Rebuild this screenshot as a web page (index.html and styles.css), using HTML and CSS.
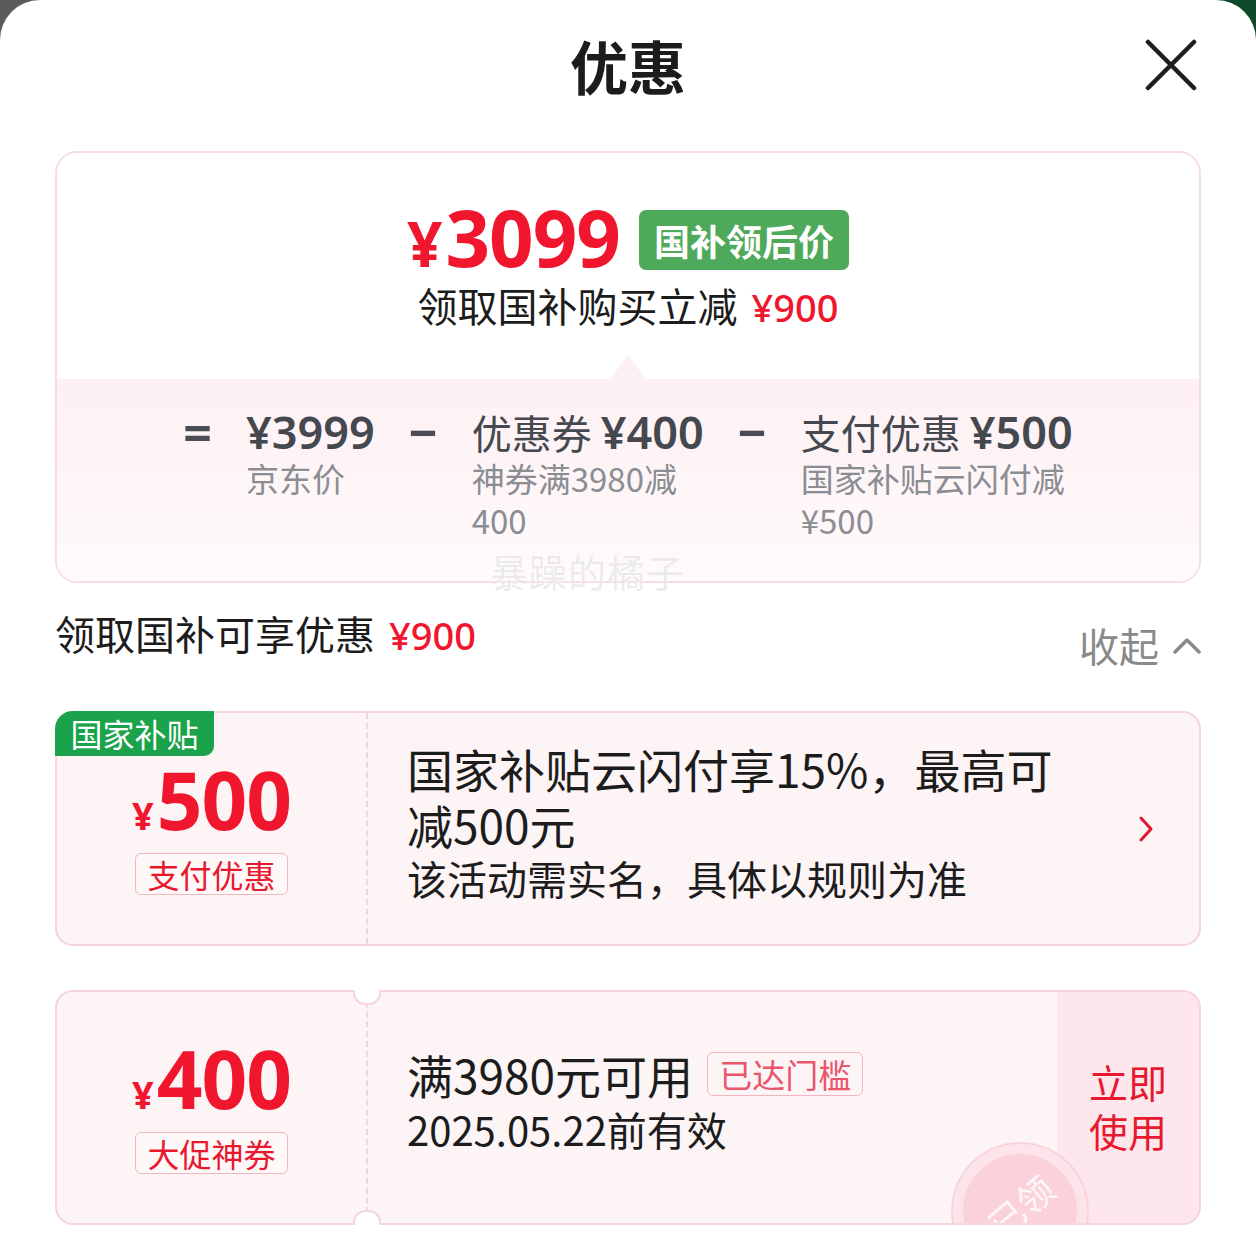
FILE: index.html
```html
<!DOCTYPE html>
<html lang="zh-CN">
<head>
    <meta charset="UTF-8">
    <meta name="viewport" content="width=device-width, initial-scale=1.0">
    <title>优惠</title>
    <link rel="stylesheet" href="styles.css">
</head>
<body>
<div class="sheet">
    <header class="head">
        <h1>优惠</h1>
        <svg class="close" viewBox="0 0 52 52" aria-label="关闭">
            <path d="M3 3 L49 49 M49 3 L3 49" stroke="#1e1e1e" stroke-width="4.5" stroke-linecap="round" fill="none"/>
        </svg>
    </header>

    <section class="summary">
        <div class="summary-top">
            <div class="final">
                <span class="final-price"><span class="yen">¥</span>3099</span>
                <span class="badge">国补领后价</span>
            </div>
            <div class="final-note">领取国补购买立减<span class="red">¥900</span></div>
        </div>
        <div class="calc">
            <span class="op">=</span>
            <div class="term">
                <div class="term-main"><span class="num">¥3999</span></div>
                <div class="term-sub">京东价</div>
            </div>
            <span class="op">−</span>
            <div class="term">
                <div class="term-main">优惠券 <span class="num">¥400</span></div>
                <div class="term-sub">神券满3980减400</div>
            </div>
            <span class="op">−</span>
            <div class="term">
                <div class="term-main">支付优惠 <span class="num">¥500</span></div>
                <div class="term-sub">国家补贴云闪付减¥500</div>
            </div>
        </div>
        <div class="watermark">暴躁的橘子</div>
    </section>

    <div class="sec-head">
        <div class="sec-title">领取国补可享优惠<span class="red">¥900</span></div>
        <div class="collapse">
            收起
            <svg width="28" height="18" viewBox="0 0 28 18">
                <polyline points="2,16 14,4 26,16" stroke="#8a8a8a" stroke-width="3.5" fill="none" stroke-linecap="round" stroke-linejoin="round"/>
            </svg>
        </div>
    </div>

    <div class="coupon">
        <div class="subsidy">国家补贴</div>
        <div class="coupon-left">
            <div class="amount"><span class="yen">¥</span>500</div>
            <div class="tag">支付优惠</div>
        </div>
        <div class="coupon-body">
            <div>
                <div class="coupon-title">国家补贴云闪付享15%，最高可减500元</div>
                <div class="coupon-desc">该活动需实名，具体以规则为准</div>
            </div>
            <svg class="arrow" width="18" height="28" viewBox="0 0 18 28">
                <polyline points="4,3 14,14 4,25" stroke="#e3162d" stroke-width="3" fill="none" stroke-linecap="round" stroke-linejoin="round"/>
            </svg>
        </div>
    </div>

    <div class="coupon ticket">
        <div class="coupon-left">
            <div class="amount"><span class="yen">¥</span>400</div>
            <div class="tag">大促神券</div>
        </div>
        <div class="coupon-body">
            <div>
                <div class="coupon-line">满3980元可用<span class="reached">已达门槛</span></div>
                <div class="coupon-date">2025.05.22前有效</div>
            </div>
        </div>
        <div class="coupon-action">立即<br>使用</div>
        <div class="stamp-clip">
            <div class="stamp"><span>已领</span></div>
        </div>
    </div>
</div>
</body>
</html>
```

FILE: styles.css
```css
* {
    box-sizing: border-box;
}
html {
    background: linear-gradient(90deg, #5b5b5b 0%, #3b4a40 50%, #0d4a2a 100%);
}
body {
    margin: 0;
    font-family: "Noto Sans CJK SC", "Noto Sans", sans-serif;
    color: #1c1c1c;
}
.sheet {
    background: #fff;
    border-radius: 40px 40px 0 0;
    min-height: 1243px;
    padding: 0 55px 20px;
}
.head {
    height: 136px;
    display: grid;
    grid-template-columns: 1fr auto 1fr;
    align-items: center;
}
.head h1 {
    grid-column: 2;
    margin: -6px 0 0;
    font-size: 58px;
    font-weight: 700;
    line-height: 1;
}
.close {
    justify-self: end;
    width: 52px;
    height: 52px;
    margin-right: 4px;
    margin-top: -6px;
}

/* price summary card */
.summary {
    position: relative;
    margin-top: 15px;
    border: 2px solid #f8dee3;
    border-radius: 22px;
}
.summary-top {
    position: relative;
    padding: 47px 0;
    text-align: center;
}
.summary-top::after {
    content: "";
    position: absolute;
    left: 50%;
    bottom: 0;
    transform: translateX(-50%);
    border-left: 18px solid transparent;
    border-right: 18px solid transparent;
    border-bottom: 24px solid #fdf0f2;
}
.final {
    display: flex;
    justify-content: center;
    align-items: center;
    gap: 19px;
    height: 80px;
}
.final-price {
    font-family: "Noto Sans", sans-serif;
    font-weight: 700;
    font-size: 78px;
    line-height: 80px;
    color: #f0162e;
    letter-spacing: -1px;
}
.final-price .yen {
    font-size: 62px;
    margin-right: 4px;
}
.badge {
    background: #4fa95b;
    color: #fff;
    font-size: 36px;
    font-weight: 700;
    line-height: 60px;
    padding: 0 15px;
    border-radius: 7px;
}
.final-note {
    font-size: 40px;
    line-height: 50px;
}
.red {
    font-family: "Noto Sans", sans-serif;
    font-size: 38px;
    font-weight: 500;
    color: #f0162e;
    margin-left: 14px;
}
.calc {
    height: 202px;
    padding-top: 28px;
    display: flex;
    justify-content: center;
    align-items: flex-start;
    gap: 34px;
    background: linear-gradient(#fdf0f3, #fffafb);
    border-radius: 0 0 20px 20px;
}
.op {
    font-family: "Noto Sans", sans-serif;
    font-size: 50px;
    font-weight: 700;
    line-height: 50px;
    color: #4a4d55;
}
.term {
    display: flex;
    flex-direction: column;
}
.term-main {
    font-size: 40px;
    line-height: 50px;
    color: #45484f;
    white-space: nowrap;
}
.term-main .num {
    font-family: "Noto Sans", sans-serif;
    font-size: 45px;
    font-weight: 600;
}
.term-sub {
    width: 0;
    min-width: 100%;
    font-size: 33px;
    line-height: 42px;
    color: #8b8d94;
}
.watermark {
    position: absolute;
    left: 433px;
    top: 396px;
    font-size: 38px;
    line-height: 44px;
    color: rgba(185, 185, 185, 0.28);
    text-shadow: 0 0 2px #fff;
    letter-spacing: 1px;
}

/* section heading */
.sec-head {
    height: 128px;
    padding-top: 28px;
    display: flex;
    justify-content: space-between;
    align-items: flex-start;
}
.sec-title {
    font-size: 40px;
    line-height: 44px;
}
.collapse {
    display: flex;
    align-items: center;
    gap: 14px;
    margin-top: 12px;
    font-size: 40px;
    line-height: 44px;
    color: #8a8a8a;
}

/* coupons */
.coupon {
    position: relative;
    display: flex;
    height: 235px;
    border: 2px solid #f6d5dc;
    border-radius: 18px;
    background: #fdf4f6;
}
.coupon + .coupon {
    margin-top: 44px;
}
.subsidy {
    position: absolute;
    top: -2px;
    left: -2px;
    width: 159px;
    height: 45px;
    background: #1aa34a;
    color: #fff;
    font-size: 32px;
    line-height: 45px;
    text-align: center;
    border-radius: 18px 0 10px 0;
}
.coupon-left {
    width: 309px;
    flex-shrink: 0;
    display: flex;
    flex-direction: column;
    align-items: center;
    padding-top: 46px;
}
.amount {
    font-family: "Noto Sans", sans-serif;
    font-weight: 700;
    font-size: 80px;
    line-height: 80px;
    color: #f0162e;
    letter-spacing: -1px;
}
.amount .yen {
    font-size: 38px;
    margin-right: 4px;
}
.tag {
    margin-top: -2px;
    padding: 0 11px;
    border: 1px solid #efb7c0;
    border-radius: 6px;
    background: #fff8f9;
    color: #e8182f;
    font-size: 32px;
    line-height: 40px;
}
.coupon-body {
    flex: 1;
    display: flex;
    align-items: center;
    justify-content: space-between;
    padding: 0 44px 14px 39px;
    border-left: 2px dashed #f1d6dc;
}
.arrow {
    margin-top: 14px;
}
.coupon-title {
    max-width: 665px;
    font-size: 46px;
    line-height: 56px;
}
.coupon-desc {
    font-size: 40px;
    line-height: 52px;
}
.coupon-line {
    display: flex;
    align-items: center;
    font-size: 46px;
    line-height: 56px;
}
.reached {
    margin-left: 14px;
    padding: 0 11px;
    border: 1px solid #f2b5c0;
    border-radius: 6px;
    color: #e9566b;
    font-size: 33px;
    line-height: 42px;
}
.coupon-date {
    font-size: 40px;
    line-height: 54px;
}
.coupon-action {
    width: 142px;
    flex-shrink: 0;
    display: flex;
    align-items: center;
    justify-content: center;
    padding-bottom: 4px;
    background: #fde7ed;
    border-radius: 0 16px 16px 0;
    color: #e8182f;
    font-size: 39px;
    line-height: 49px;
    text-align: center;
}
.ticket::before,
.ticket::after {
    content: "";
    position: absolute;
    left: 296px;
    width: 24px;
    height: 13px;
    background: #fff;
    border: 2px solid #f6d5dc;
    z-index: 1;
}
.ticket::before {
    top: -2px;
    border-top: none;
    border-radius: 0 0 12px 12px;
}
.ticket::after {
    bottom: -2px;
    border-bottom: none;
    border-radius: 12px 12px 0 0;
}
.stamp-clip {
    position: absolute;
    inset: 0;
    border-radius: 16px;
    overflow: hidden;
    pointer-events: none;
}
.stamp {
    position: absolute;
    left: 896px;
    top: 152px;
    width: 134px;
    height: 134px;
    border-radius: 50%;
    background: #fbd1db;
    border: 10px solid #fde4ea;
    box-shadow: 0 0 0 2px #f9d3db;
    display: flex;
    align-items: center;
    justify-content: center;
}
.stamp span {
    transform: rotate(-40deg);
    color: rgba(255, 255, 255, 0.85);
    font-size: 36px;
    margin-top: -12px;
}
```
